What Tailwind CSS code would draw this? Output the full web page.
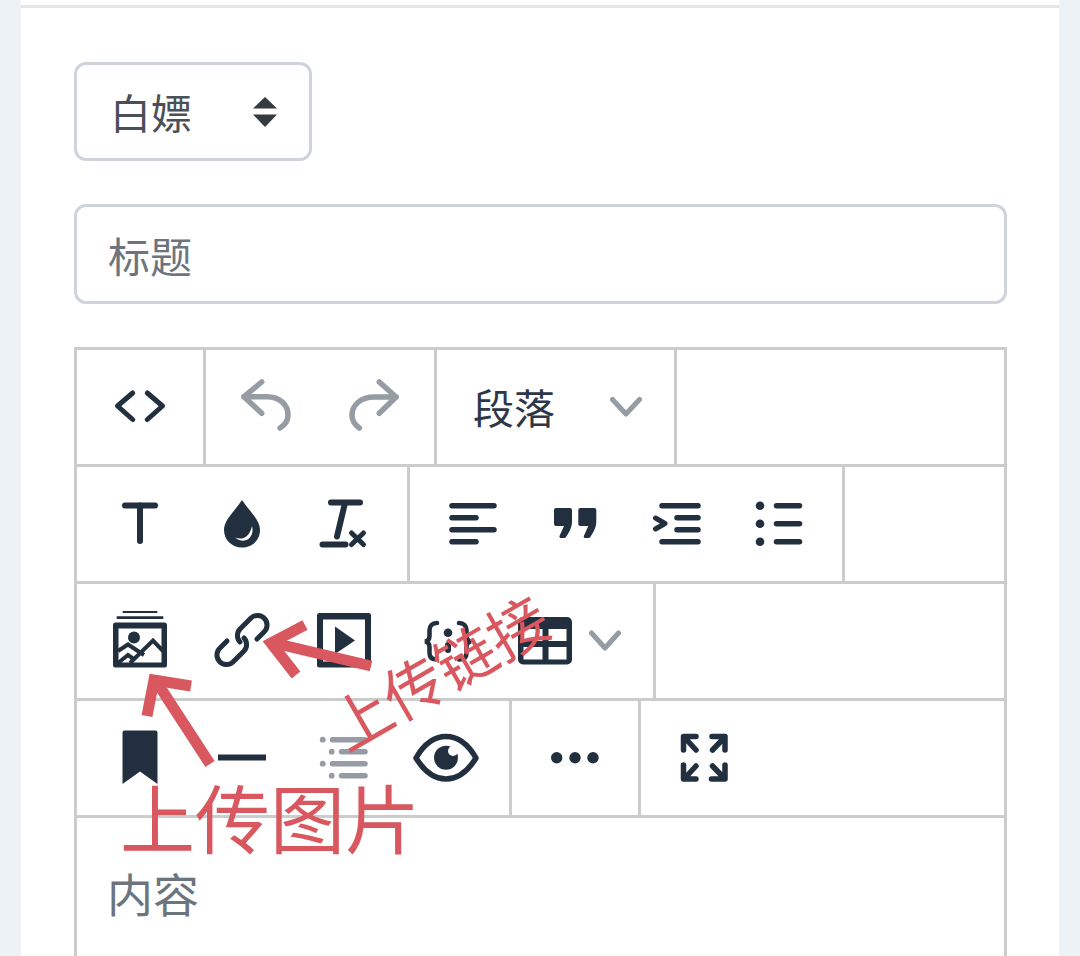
<!DOCTYPE html>
<html lang="zh-CN">
<head>
  <meta charset="UTF-8" />
  <title>编辑器</title>
  <script src="https://cdn.jsdelivr.net/npm/@tailwindcss/browser@4"></script>
</head>
<body class="relative h-[956px] overflow-hidden bg-[#edf2f7] font-['Noto_Sans_CJK_SC',sans-serif]">
  <main class="mx-[21px] h-[956px] bg-white">
    <div class="h-[8px] border-b-[3px] border-[#e3e6e9]"></div>
    <div class="pl-[53px] pr-[52px] pt-[54px]">

      <div class="flex h-[99px] w-[238px] items-center justify-between rounded-[12px] border-[3px] border-[#ced4da] pl-[33px] pr-[32px] text-[41px] text-[#495057]">
        <span>白嫖</span>
        <svg class="h-[30px] w-[24px]" viewBox="253 97 24 30" fill="#343a40"><path d="M265 97 277 108.500H253Z"/><path d="M253 114.500H277L265 127Z"/></svg>
      </div>

      <div class="mt-[43px] flex h-[100px] items-center rounded-[12px] border-[3px] border-[#ced4da] pl-[31px] text-[42px] text-[#6c757d]">标题</div>

      <div class="mt-[43px] h-[620px] border-[3px] border-[#cccccc] border-b-0">
        <!-- row 1 -->
        <div class="flex h-[117px] border-b-[3px] border-[#cccccc]">
          <div class="flex items-center border-r-[3px] border-[#cccccc] px-[12px]">
            <div class="flex w-[102px] justify-center">
              <svg class="h-[60px] w-[60px]" viewBox="110 377 60 60" fill="none" stroke="#222f3e" stroke-width="5" stroke-linecap="round" stroke-linejoin="round"><path d="M132.700 393 117.500 406 132.700 419.500"/><path d="M147.300 393 162.500 406 147.300 419.500"/></svg>
            </div>
          </div>
          <div class="flex items-center border-r-[3px] border-[#cccccc] px-[6px]">
            <div class="flex w-[108px] justify-center">
              <svg class="h-[60px] w-[60px]" viewBox="236 377 60 60" fill="none" stroke="#969ca3" stroke-width="5.500" stroke-linecap="round" stroke-linejoin="round"><path d="M261.700 382 244 396.700 261.700 413.300"/><path d="M244 396.700H267C280 396.700 288 405 288 415 288 420 285 425 280 428"/></svg>
            </div>
            <div class="flex w-[108px] justify-center">
              <svg class="h-[60px] w-[60px]" viewBox="344 377 60 60" fill="none" stroke="#969ca3" stroke-width="5.500" stroke-linecap="round" stroke-linejoin="round"><path d="M379.300 382 396 397 379.300 413.300"/><path d="M396 397H374C361 397 352 405 352 415 352 420 355 425 359.300 428"/></svg>
            </div>
          </div>
          <div class="flex w-[240px] items-center border-r-[3px] border-[#cccccc] pl-[36px] pr-[32px]">
            <span class="text-[41px] text-[#2d3748]">段落</span>
            <svg class="ml-auto h-[30px] w-[32px]" viewBox="610 392 32 30" fill="none" stroke="#969ca3" stroke-width="5" stroke-linecap="round" stroke-linejoin="round"><path d="M612.500 399.500 626 414 639.500 399.500"/></svg>
          </div>
        </div>
        <!-- row 2 -->
        <div class="flex h-[117px] border-b-[3px] border-[#cccccc]">
          <div class="flex items-center border-r-[3px] border-[#cccccc] px-[12px]">
            <div class="flex w-[102px] justify-center">
              <svg class="h-[60px] w-[60px]" viewBox="110 494 60 60" fill="none" stroke="#222f3e" stroke-width="6" stroke-linecap="round"><path d="M125 505.500H155"/><path d="M140 505.500V541"/></svg>
            </div>
            <div class="flex w-[102px] justify-center">
              <svg class="h-[60px] w-[60px]" viewBox="212 494 60 60"><path fill="#222f3e" d="M242 500C250 512 260 520 260 530 260 540 252 547.500 242 547.500 232 547.500 224 540 224 530 224 520 234 512 242 500Z"/><path fill="#fff" d="M235 537.500C243 541 250 536 252 526 255 536 246 546 235 537.500Z"/></svg>
            </div>
            <div class="flex w-[102px] justify-center">
              <svg class="h-[60px] w-[60px]" viewBox="314 494 60 60" fill="none" stroke="#222f3e" stroke-width="6" stroke-linecap="round"><path d="M331 502.500H360"/><path d="M345 503 337 536.500"/><path d="M322.500 544.500H345.500"/><path d="M351.500 533 363.500 544.500M363.500 533 351.500 544.500" stroke-width="5"/></svg>
            </div>
          </div>
          <div class="flex items-center border-r-[3px] border-[#cccccc] px-[12px]">
            <div class="flex w-[102px] justify-center">
              <svg class="h-[60px] w-[60px]" viewBox="443 494 60 60" fill="none" stroke="#222f3e" stroke-width="5.500" stroke-linecap="round"><path d="M452 505.700H494M452 517.700H476M452 529.700H494M452 541.700H476"/></svg>
            </div>
            <div class="flex w-[102px] justify-center">
              <svg class="h-[60px] w-[60px]" viewBox="545 494 60 60" fill="#222f3e"><path d="M556 508H570A2 2 0 0 1 572 510V522C572 528 568 534 566 537A2 2 0 0 1 564 538H561A1.500 1.500 0 0 1 559.500 536L564 526H556A2 2 0 0 1 554 524V510A2 2 0 0 1 556 508Z"/><path transform="translate(24.300 0)" d="M556 508H570A2 2 0 0 1 572 510V522C572 528 568 534 566 537A2 2 0 0 1 564 538H561A1.500 1.500 0 0 1 559.500 536L564 526H556A2 2 0 0 1 554 524V510A2 2 0 0 1 556 508Z"/></svg>
            </div>
            <div class="flex w-[102px] justify-center">
              <svg class="h-[60px] w-[60px]" viewBox="647 494 60 60" fill="none" stroke="#222f3e" stroke-width="5.500" stroke-linecap="round" stroke-linejoin="round"><path d="M662 505.700H698M677 517.700H698M677 529.700H698M662 541.700H698"/><path d="M655.500 518 665 523.500 655.500 529" stroke-width="5"/></svg>
            </div>
            <div class="flex w-[102px] justify-center">
              <svg class="h-[60px] w-[60px]" viewBox="750 494 60 60"><g fill="#222f3e"><circle cx="761" cy="505.700" r="4.300"/><circle cx="761" cy="523.700" r="4.300"/><circle cx="761" cy="541.700" r="4.300"/></g><path d="M777.500 505.700H800.500M777.500 523.700H800.500M777.500 541.700H800.500" fill="none" stroke="#222f3e" stroke-width="5.500" stroke-linecap="round"/></svg>
            </div>
          </div>
        </div>
        <!-- row 3 -->
        <div class="flex h-[117px] border-b-[3px] border-[#cccccc]">
          <div class="flex items-center border-r-[3px] border-[#cccccc] pl-[12px] pr-[32px]">
            <div class="flex w-[102px] justify-center">
              <svg class="h-[60px] w-[60px]" viewBox="110 611 60 60"><path d="M122.700 611.500H157.300M116.700 617.700H163.300" stroke="#222f3e" stroke-width="2.800"/><path fill="#222f3e" fill-rule="evenodd" d="M115.500 622.500H164.500A2.500 2.500 0 0 1 167 625V665A2.500 2.500 0 0 1 164.500 667.500H115.500A2.500 2.500 0 0 1 113 665V625A2.500 2.500 0 0 1 115.500 622.500ZM118.500 628.500V662.500H161.500V628.500Z"/><circle cx="134" cy="637.500" r="6" fill="#222f3e"/><path d="M118 651 128 644.500 144 655M130 663 153 640.500 163 651M118 663 128 655 135 660" fill="none" stroke="#222f3e" stroke-width="4"/></svg>
            </div>
            <div class="flex w-[102px] justify-center">
              <svg class="h-[60px] w-[60px]" viewBox="212 611 60 60" fill="none" stroke="#222f3e" stroke-width="5" stroke-linecap="round" stroke-linejoin="round"><path d="M257 639 264 632A9.500 9.500 0 0 0 251 618L240 629A9.500 9.500 0 0 0 240 642"/><path d="M227 641 220 648A9.500 9.500 0 0 0 233 662L244 651A9.500 9.500 0 0 0 244 638"/></svg>
            </div>
            <div class="flex w-[102px] justify-center">
              <svg class="h-[60px] w-[60px]" viewBox="314 611 60 60"><path fill="#222f3e" fill-rule="evenodd" d="M319.500 613H368.500A2.500 2.500 0 0 1 371 615.500V665A2.500 2.500 0 0 1 368.500 667.500H319.500A2.500 2.500 0 0 1 317 665V615.500A2.500 2.500 0 0 1 319.500 613ZM323 619.500V661.500H365V619.500Z"/><path fill="#222f3e" d="M335 626.500 355 640.500 335 654Z"/></svg>
            </div>
            <div class="flex w-[102px] justify-center">
              <svg class="h-[60px] w-[60px]" viewBox="414 611 60 60"><path d="M435 623C430 623 427.500 626 427.500 630V636C427.500 639 426 641 423 641.500 426 642 427.500 644 427.500 647V653C427.500 657 430 659.500 435 659.500M457 623C462 623 464.500 626 464.500 630V636C464.500 639 466 641 469 641.500 466 642 464.500 644 464.500 647V653C464.500 657 462 659.500 457 659.500" fill="none" stroke="#222f3e" stroke-width="4.500" stroke-linecap="round"/><circle cx="446" cy="632.700" r="4.300" fill="#222f3e"/><path d="M446 645V650" stroke="#222f3e" stroke-width="6" stroke-linecap="round"/></svg>
            </div>
            <div class="ml-[21px] flex items-center gap-[17px]">
              <svg class="h-[48px] w-[54px]" viewBox="518 616.500 54 48"><path fill="#222f3e" fill-rule="evenodd" d="M523 616.500H567A5 5 0 0 1 572 621.500V659A5 5 0 0 1 567 664H523A5 5 0 0 1 518 659V621.500A5 5 0 0 1 523 616.500ZM523.500 628.500V640.500H542.500V628.500ZM548.500 628.500V640.500H566.500V628.500ZM523.500 646.500V659H542.500V646.500ZM548.500 646.500V659H566.500V646.500Z"/></svg>
              <svg class="h-[30px] w-[32px]" viewBox="589 626 32 30" fill="none" stroke="#969ca3" stroke-width="5" stroke-linecap="round" stroke-linejoin="round"><path d="M591.500 633 605 648 618.500 633"/></svg>
            </div>
          </div>
        </div>
        <!-- row 4 -->
        <div class="flex h-[117px] border-b-[3px] border-[#cccccc]">
          <div class="flex items-center border-r-[3px] border-[#cccccc] px-[12px]">
            <div class="flex w-[102px] justify-center">
              <svg class="h-[60px] w-[60px]" viewBox="110 728 60 60"><path fill="#222f3e" d="M124.500 730.500H155.500A2 2 0 0 1 157.500 732.500V784L140 771.500 122.500 784V732.500A2 2 0 0 1 124.500 730.500Z"/></svg>
            </div>
            <div class="flex w-[102px] justify-center">
              <svg class="h-[60px] w-[60px]" viewBox="212 728 60 60"><path fill="#222f3e" d="M218 754.500H266V760.500H218Z"/></svg>
            </div>
            <div class="flex w-[102px] justify-center">
              <svg class="h-[60px] w-[60px]" viewBox="314 728 60 60"><g fill="#969ca3"><circle cx="322.700" cy="739.700" r="2.900"/><circle cx="331.700" cy="751.700" r="2.900"/><circle cx="322.700" cy="763.700" r="2.900"/><circle cx="331.700" cy="775.700" r="2.900"/></g><path d="M332.500 739.700H365M341.500 751.700H365M332.500 763.700H365M341.500 775.700H365" fill="none" stroke="#969ca3" stroke-width="5.500" stroke-linecap="round"/></svg>
            </div>
            <div class="flex w-[102px] justify-center">
              <svg class="h-[60px] w-[68px]" viewBox="412 728 68 60"><path d="M416 758C424 744 434 736.500 446 736.500 458 736.500 468 744 476 758 468 771 458 779 446 779 434 779 424 771 416 758Z" fill="none" stroke="#222f3e" stroke-width="5.500" stroke-linejoin="round"/><circle cx="446" cy="757.700" r="12" fill="#222f3e"/><circle cx="453" cy="751" r="5" fill="#fff"/></svg>
            </div>
          </div>
          <div class="flex items-center border-r-[3px] border-[#cccccc] px-[12px]">
            <div class="flex w-[102px] justify-center">
              <svg class="h-[60px] w-[60px]" viewBox="545 728 60 60" fill="#222f3e"><circle cx="556.700" cy="757.700" r="5.700"/><circle cx="575" cy="757.700" r="5.700"/><circle cx="593" cy="757.700" r="5.700"/></svg>
            </div>
          </div>
          <div class="flex items-center px-[12px]">
            <div class="flex w-[102px] justify-center">
              <svg class="h-[60px] w-[60px]" viewBox="674 728 60 60" fill="none" stroke="#222f3e" stroke-width="5.500" stroke-linecap="round" stroke-linejoin="round"><path d="M696 736.500H683.500V750M685 738 696 750"/><path d="M712 736.500H725V750M724 738 712.500 750"/><path d="M683.500 765V779H696M685 778 696 766"/><path d="M725 765V779H711.500M724 778 712.500 766"/></svg>
            </div>
          </div>
        </div>
        <div class="pl-[30px] pt-[41px] text-[46px] leading-[67px] text-[#6c757d]">内容</div>
      </div>
    </div>
  </main>

  <!-- hand drawn notes on top of the screenshot -->
  <svg class="absolute left-0 top-0 h-[956px] w-[1080px]" viewBox="0 0 1080 956" fill="none" stroke="#d9575f" stroke-width="11">
    <path d="M371 666 274 643"/>
    <path d="M305 625 271 643 296 675"/>
    <path d="M210 764 156 681"/>
    <path d="M191 686 154 680 147 716"/>
  </svg>
  <div class="absolute left-[120px] top-[778px] text-[75px] leading-none whitespace-nowrap text-[#d9575f]">上传图片</div>
  <div class="absolute left-[334px] top-[700px] origin-left -rotate-[30deg] text-[60px] leading-none whitespace-nowrap text-[#d9575f]">上传链接</div>
</body>
</html>
